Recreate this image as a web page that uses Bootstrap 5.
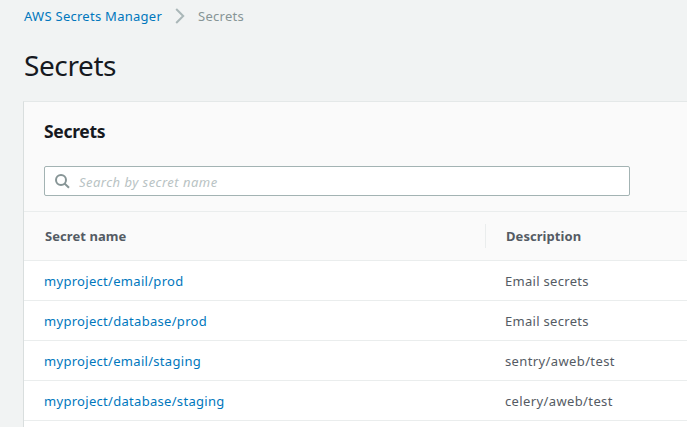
<!DOCTYPE html>
<html lang="en">
<head>
<meta charset="utf-8">
<meta name="viewport" content="width=device-width, initial-scale=1">
<title>Secrets</title>
<link href="https://cdn.jsdelivr.net/npm/bootstrap@5.3.0/dist/css/bootstrap.min.css" rel="stylesheet">
<style>
body{background:#f1f3f3;font-family:"Noto Sans",sans-serif;font-size:13px;line-height:20px;color:#545b64;height:427px;letter-spacing:.3px}
a{color:#0077bd;text-decoration:none}
.crumbs{padding:6px 0 0 24px;height:36px;letter-spacing:.27px}
.crumbs .current{color:#879596}
.crumbs svg{margin:2px 12px 0 13px}
h1{font-size:28px;line-height:36px;font-weight:400;color:#16191f;margin:11px 0 18px 24px;letter-spacing:-.4px}
.panel{margin-left:23px;background:#fff;border:1px solid #e4e8e8;border-width:1px 0 0 1px;border-left-color:#d9dede;height:326px}
.panel-top{background:#fafafa;height:110px;padding:18px 20px 0;border-bottom:1px solid #eaeded}
h2{font-size:17.5px;line-height:22px;font-weight:700;color:#16191f;margin:0 0 24px;letter-spacing:-.33px}
.search{width:586px;height:30px;border:1px solid #a3b3b3;border-radius:2px;background:#fff;padding-left:9px}
.search input{border:0;outline:0;background:none;font-size:13px;line-height:20px;padding:2px 0 0;margin-left:9px;width:500px;letter-spacing:.47px}
.search input::placeholder{color:#b9c3c4;font-style:italic;opacity:1}
.line{height:40px;border-bottom:1px solid #eaeded;padding-left:20px}
.line.heads{height:49px;background:#fafafa;font-weight:700;padding-left:21px;letter-spacing:.06px}
.name{width:461px}
.heads .name{width:440px}
.heads .desc{border-left:1px solid #eaeded;padding-left:20px;line-height:24px}
.path{letter-spacing:.38px}
</style>
<script src="https://cdn.jsdelivr.net/npm/bootstrap@5.3.0/dist/js/bootstrap.bundle.min.js"></script>
</head>
<body class="overflow-hidden">
<nav class="crumbs d-flex align-items-start"><a href="#">AWS Secrets Manager</a><svg width="11" height="16" viewBox="0 0 11 16" fill="none" stroke="#aab7b8" stroke-width="2"><path d="M1.2 1l7 7-7 7"/></svg><span class="current">Secrets</span></nav>
<h1>Secrets</h1>
<main class="panel">
<div class="panel-top">
<h2>Secrets</h2>
<label class="search d-flex align-items-center"><svg width="16" height="16" viewBox="0 0 16 16" fill="none" stroke="#879596" stroke-width="2"><circle cx="7" cy="7" r="5"/><path d="M10.5 10.5l4.5 4.3"/></svg><input type="text" placeholder="Search by secret name"></label>
</div>
<div class="line heads d-flex align-items-center"><div class="name">Secret name</div><div class="desc">Description</div></div>
<div class="line d-flex align-items-center"><div class="name"><a href="#">myproject/email/prod</a></div><div>Email secrets</div></div>
<div class="line d-flex align-items-center"><div class="name"><a href="#">myproject/database/prod</a></div><div>Email secrets</div></div>
<div class="line d-flex align-items-center"><div class="name"><a href="#">myproject/email/staging</a></div><div class="path">sentry/aweb/test</div></div>
<div class="line d-flex align-items-center"><div class="name"><a href="#">myproject/database/staging</a></div><div class="path">celery/aweb/test</div></div>
</main>
</body>
</html>
